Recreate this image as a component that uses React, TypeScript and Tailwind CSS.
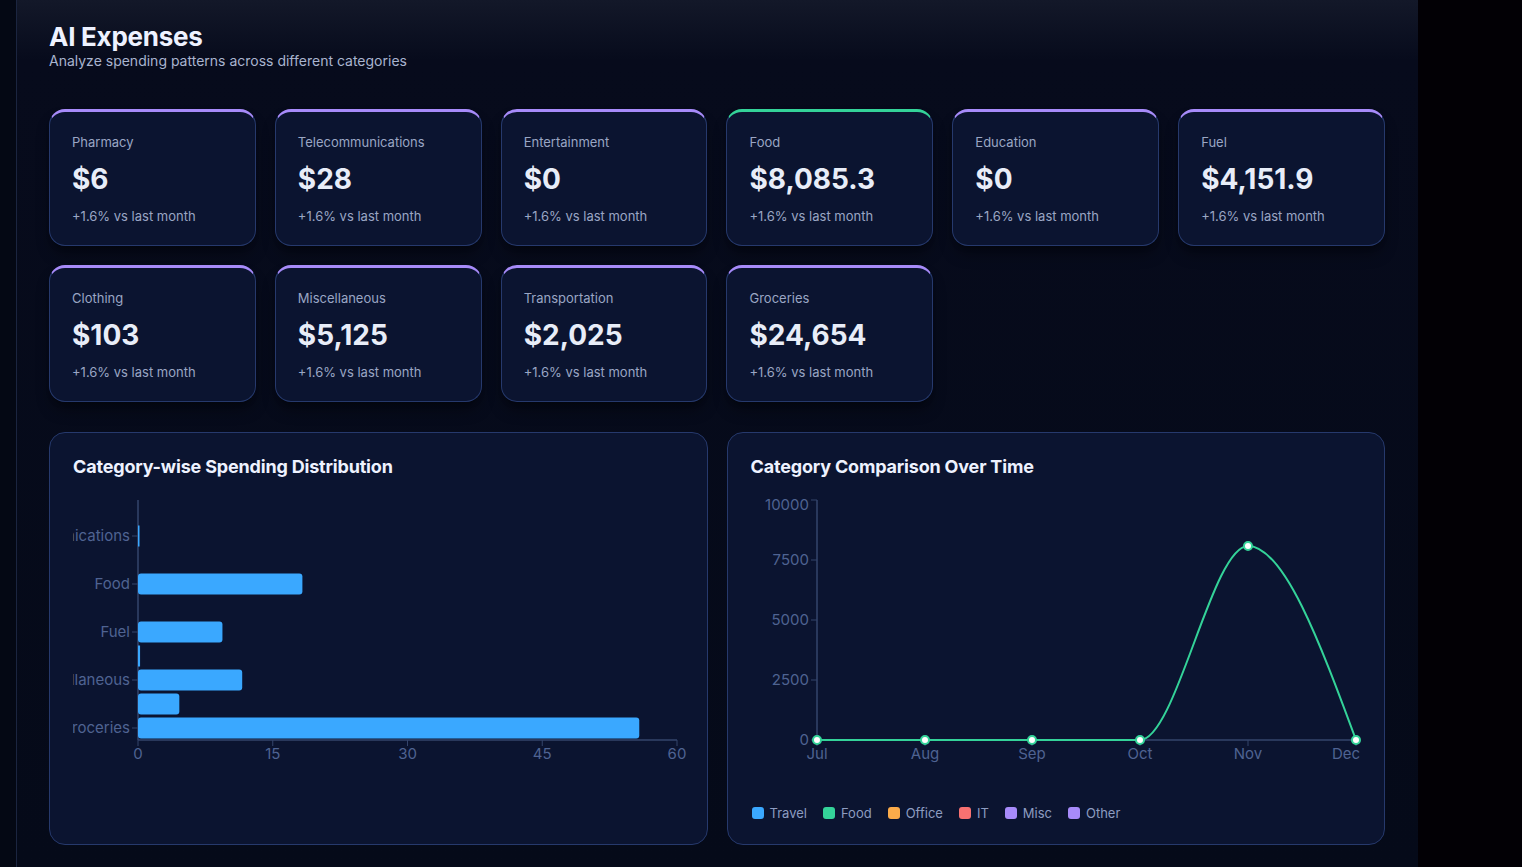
import React from "react";

const stats = [
  { label: "Pharmacy", value: "$6", accent: "purple" },
  { label: "Telecommunications", value: "$28", accent: "purple" },
  { label: "Entertainment", value: "$0", accent: "purple" },
  { label: "Food", value: "$8,085.3", accent: "green" },
  { label: "Education", value: "$0", accent: "purple" },
  { label: "Fuel", value: "$4,151.9", accent: "purple" },
  { label: "Clothing", value: "$103", accent: "purple" },
  { label: "Miscellaneous", value: "$5,125", accent: "purple" },
  { label: "Transportation", value: "$2,025", accent: "purple" },
  { label: "Groceries", value: "$24,654", accent: "purple" },
];

// share of total spend, in percent
const shares = [
  { name: "Pharmacy", pct: 0.01, show: false },
  { name: "Telecommunications", pct: 0.06, show: true },
  { name: "Entertainment", pct: 0, show: false },
  { name: "Food", pct: 18.3, show: true },
  { name: "Education", pct: 0, show: false },
  { name: "Fuel", pct: 9.4, show: true },
  { name: "Clothing", pct: 0.23, show: false },
  { name: "Miscellaneous", pct: 11.6, show: true },
  { name: "Transportation", pct: 4.6, show: false },
  { name: "Groceries", pct: 55.8, show: true },
];

const legend = [
  { name: "Travel", color: "bg-[#3aa8ff]" },
  { name: "Food", color: "bg-[#34d399]" },
  { name: "Office", color: "bg-[#fbab4a]" },
  { name: "IT", color: "bg-[#f87171]" },
  { name: "Misc", color: "bg-[#a78bfa]" },
  { name: "Other", color: "bg-[#a78bfa]" },
];

const AXIS = "#34446b";
const TICK = "#4f6392";

const StatCard = ({ label, value, accent }: { label: string; value: string; accent: string }) => (
  <div
    className={`h-[137px] rounded-2xl border border-[#26396c] border-t-[3px] bg-[#0b1430] px-[22px] pt-[22px] shadow-lg shadow-black/40 ${
      accent === "green" ? "border-t-[#34d399]" : "border-t-[#a78bfa]"
    }`}
  >
    <div className="text-[13px] leading-[16px] text-[#9aa6c4]">{label}</div>
    <div className="mt-3 text-[28px] font-bold leading-[34px] text-[#e8edf8]">{value}</div>
    <div className="mt-3 text-[13px] leading-[16px] text-[#9aa6c4]">+1.6% vs last month</div>
  </div>
);

const BarChart = () => {
  const x0 = 65;
  const unit = 539 / 60;
  return (
    <svg width="630" height="290" className="block">
      <line x1={x0} y1={10} x2={x0} y2={250} stroke={AXIS} strokeWidth={1.5} />
      <line x1={x0} y1={250} x2={604} y2={250} stroke={AXIS} strokeWidth={1.5} />
      {shares.map((s, i) => {
        const cy = 22 + i * 24;
        const w = s.pct >= 0.05 ? Math.max(s.pct * unit, 1.5) : 0;
        return (
          <g key={s.name}>
            {w > 0 && <rect x={x0} y={cy - 10.5} width={w} height={21} rx={w > 6 ? 3 : 0} fill="#3aa8ff" />}
            {s.show && (
              <>
                <line x1={x0 - 6} y1={cy} x2={x0} y2={cy} stroke={AXIS} />
                <text x={x0 - 8} y={cy + 5} textAnchor="end" fontSize={15} fill={TICK}>
                  {s.name}
                </text>
              </>
            )}
          </g>
        );
      })}
      {[0, 15, 30, 45, 60].map((t) => {
        const x = x0 + t * unit;
        return (
          <g key={t}>
            <line x1={x} y1={250} x2={x} y2={256} stroke={AXIS} />
            <text x={x} y={269} textAnchor="middle" fontSize={15} fill={TICK}>
              {t}
            </text>
          </g>
        );
      })}
    </svg>
  );
};

const LineChart = () => {
  const xs = [66, 174, 281, 389, 497, 605];
  const months = ["Jul", "Aug", "Sep", "Oct", "Nov", "Dec"];
  const peak = 250 - (8085.3 / 10000) * 240;
  const dx = 108 / 3;
  const path = `M66 250 L389 250 C${389 + dx} 250 ${497 - dx} ${peak} 497 ${peak} C${497 + dx} ${peak} ${605 - dx} ${250 - 2.7 * dx} 605 250`;
  const pts = [250, 250, 250, 250, peak, 250];
  return (
    <svg width="630" height="290" className="block">
      <line x1={66} y1={10} x2={66} y2={250} stroke={AXIS} strokeWidth={1.5} />
      <line x1={66} y1={250} x2={605} y2={250} stroke={AXIS} strokeWidth={1.5} />
      {[0, 2500, 5000, 7500, 10000].map((v) => {
        const y = 250 - (v / 10000) * 240;
        return (
          <g key={v}>
            <line x1={60} y1={y} x2={66} y2={y} stroke={AXIS} />
            <text x={58} y={v === 10000 ? y + 10 : y + 5} textAnchor="end" fontSize={15} fill={TICK}>
              {v}
            </text>
          </g>
        );
      })}
      {xs.map((x, i) => (
        <g key={months[i]}>
          <line x1={x} y1={250} x2={x} y2={256} stroke={AXIS} />
          <text x={i === 5 ? x - 10 : x} y={269} textAnchor="middle" fontSize={15} fill={TICK}>
            {months[i]}
          </text>
        </g>
      ))}
      <path d={path} fill="none" stroke="#34d399" strokeWidth={2} />
      {xs.map((x, i) => (
        <circle key={x} cx={x} cy={pts[i]} r={4} fill="#ffffff" stroke="#34d399" strokeWidth={2} />
      ))}
    </svg>
  );
};

export default function App() {
  return (
    <div className="flex h-[867px] w-full overflow-hidden bg-[#020106] font-['Inter','Noto_Sans',sans-serif]">
      <div className="w-[17px] shrink-0 border-r border-[#1b2540] bg-[#040814]" />
      <main className="w-[1401px] shrink-0 bg-[linear-gradient(to_bottom,#131829_0px,#070b1c_60px,#050a19_100%)] pl-[32px] pr-[33px] pt-[22px]">
        <h1 className="text-[26px] font-bold leading-[30px] tracking-[-0.01em] text-[#eef2ff]">AI Expenses</h1>
        <p className="text-[14px] leading-[18px] text-[#a9b4cf]">Analyze spending patterns across different categories</p>

        <div className="mt-[39px] grid grid-cols-6 gap-[19px]">
          {stats.map((s) => (
            <StatCard key={s.label} {...s} />
          ))}
        </div>

        <div className="mt-[30px] grid grid-cols-2 gap-[19px]">
          <div className="h-[413px] overflow-hidden rounded-2xl border border-[#26396c] bg-[#0b1430] px-[23px] pt-[22px]">
            <h2 className="text-[18px] font-bold leading-[24px] tracking-[-0.01em] text-[#eef2ff]">Category-wise Spending Distribution</h2>
            <div className="mt-[11px]">
              <BarChart />
            </div>
          </div>
          <div className="h-[413px] overflow-hidden rounded-2xl border border-[#26396c] bg-[#0b1430] px-[23px] pt-[22px]">
            <h2 className="text-[18px] font-bold leading-[24px] tracking-[-0.01em] text-[#eef2ff]">Category Comparison Over Time</h2>
            <div className="mt-[11px]">
              <LineChart />
            </div>
            <div className="mt-[25px] flex items-center gap-4 pl-px">
              {legend.map((l) => (
                <div key={l.name} className="flex items-center gap-[6px]">
                  <span className={`h-3 w-3 rounded-[3px] ${l.color}`} />
                  <span className="text-[13px] leading-[16px] text-[#8d9cc0]">{l.name}</span>
                </div>
              ))}
            </div>
          </div>
        </div>
      </main>
      <div className="flex-1 bg-[#020005]" />
    </div>
  );
}
